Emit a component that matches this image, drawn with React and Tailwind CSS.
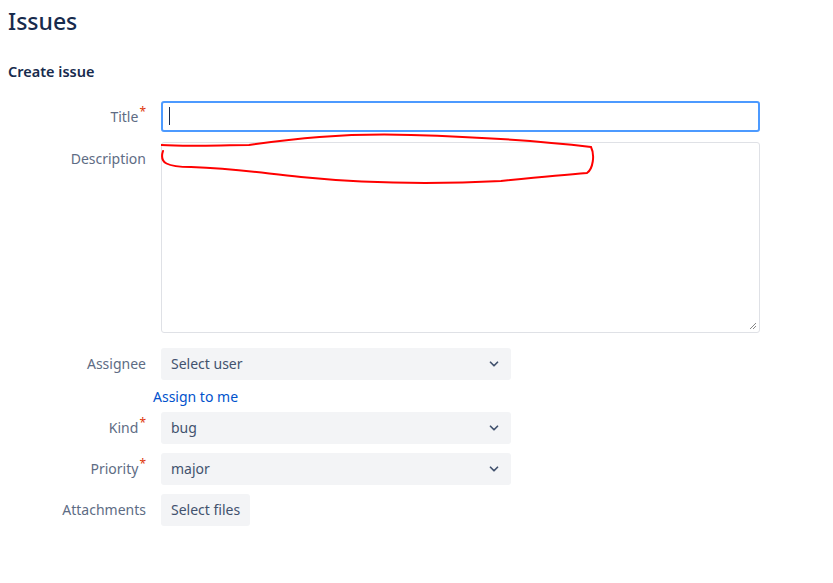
import { ChevronDown } from 'lucide-react'

const font = { fontFamily: '"Noto Sans", "Open Sans", sans-serif' }

function Label({ text, required }) {
  return (
    <div className="w-[138px] shrink-0 text-right text-[14px] text-[#5e6c84]">
      {text}
      {required && <sup className="text-[#de350b] text-[12px] ml-px">*</sup>}
    </div>
  )
}

function Select({ value }) {
  return (
    <div className="flex h-8 w-[350px] items-center justify-between rounded-[3px] bg-[#f3f4f6] px-[10px] text-[14px] text-[#42526e]">
      <span>{value}</span>
      <ChevronDown size={14} strokeWidth={3} className="text-[#42526e]" />
    </div>
  )
}

export default function App() {
  return (
    <div className="min-h-[583px] bg-white px-2 pt-[5px]" style={font}>
      <h1 className="text-[23px] font-medium leading-8 text-[#172b4d]">Issues</h1>
      <h2 className="mt-[24px] text-[14.5px] font-semibold text-[#172b4d]">Create issue</h2>

      <div className="mt-[18px] flex flex-col">
        <div className="flex items-center gap-[15px]">
          <Label text="Title" required />
          <div className="flex h-[31px] w-[599px] items-center rounded-[3px] border-2 border-[#4c9aff] px-[6px]">
            <div className="h-[18px] w-px bg-[#172b4d]" />
          </div>
        </div>

        <div className="mt-[10px] flex items-start gap-[15px]">
          <div className="pt-[6px]"><Label text="Description" /></div>
          <div className="relative h-[191px] w-[599px] rounded-[3px] border border-[#dfe1e6]">
            <svg className="absolute -left-px -top-[10px]" width="440" height="60" viewBox="0 0 440 60" fill="none">
              <path d="M0 12 C30 14 60 12 88 12 C130 6 180 0 250 2 C320 4 380 8 430 14 C434 22 432 36 426 40 C400 42 380 44 340 48 C260 52 200 50 140 44 C100 40 80 36 30 34 C6 34 -2 30 2 18"
                stroke="#ff0000" strokeWidth="2" strokeLinecap="round" />
            </svg>
            <svg className="absolute bottom-[2px] right-[2px]" width="8" height="8" viewBox="0 0 8 8">
              <path d="M1 7 L7 1 M4 7 L7 4" stroke="#888" strokeWidth="1" />
            </svg>
          </div>
        </div>

        <div className="mt-[15px] flex items-center gap-[15px]">
          <Label text="Assignee" />
          <Select value="Select user" />
        </div>
        <div className="ml-[145px] mt-[6px] text-[14px] text-[#0052cc]">Assign to me</div>

        <div className="mt-[5px] flex items-center gap-[15px]">
          <Label text="Kind" required />
          <Select value="bug" />
        </div>
        <div className="mt-[9px] flex items-center gap-[15px]">
          <Label text="Priority" required />
          <Select value="major" />
        </div>
        <div className="mt-[9px] flex items-center gap-[15px]">
          <Label text="Attachments" />
          <div className="flex h-8 items-center rounded-[3px] bg-[#f3f4f6] px-[10px] text-[14px] text-[#42526e]">Select files</div>
        </div>
      </div>
    </div>
  )
}
